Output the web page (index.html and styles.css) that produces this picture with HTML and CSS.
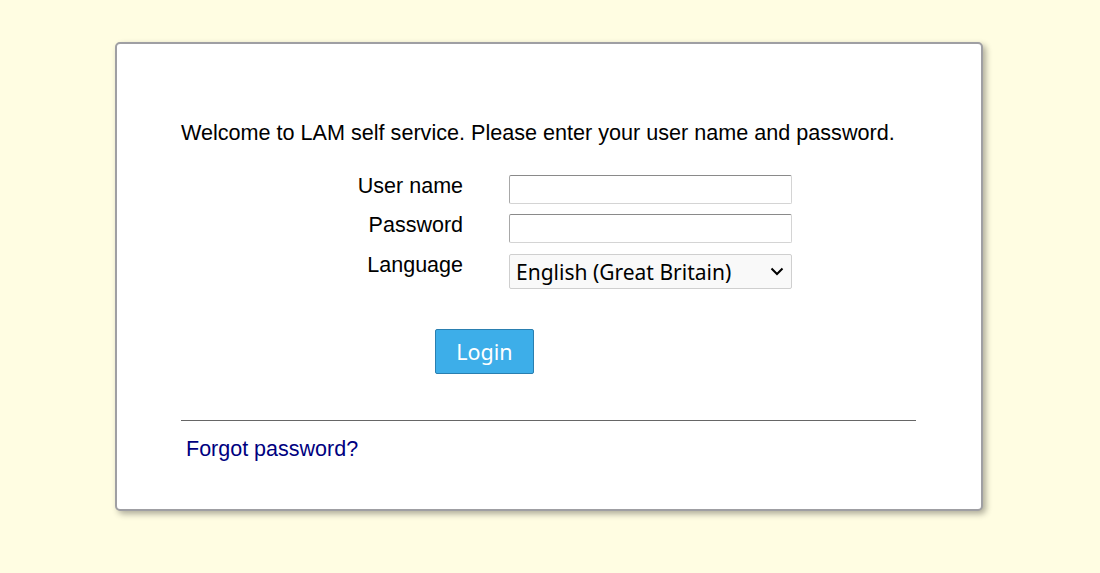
FILE: index.html
```html
<!DOCTYPE html>
<html>
<head>
<meta charset="utf-8">
<link rel="stylesheet" href="styles.css">
</head>
<body>
<div class="page">
  <div class="card">
    <p class="welcome">Welcome to LAM self service. Please enter your user name and password.</p>
    <div class="form">
      <div class="row r1">
        <label class="lbl">User name</label>
        <input class="field" type="text">
      </div>
      <div class="row r2">
        <label class="lbl">Password</label>
        <input class="field" type="password">
      </div>
      <div class="row r3">
        <label class="lbl">Language</label>
        <div class="select">
          <span>English (Great Britain)</span>
          <svg class="chev" width="14" height="9" viewBox="0 0 14 9"><path d="M1.5 1.5 L7 7 L12.5 1.5" fill="none" stroke="#000" stroke-width="2"/></svg>
        </div>
      </div>
    </div>
    <div class="btnrow"><button class="login">Login</button></div>
    <div class="rule"></div>
    <a class="forgot" href="#">Forgot password?</a>
  </div>
</div>
</body>
</html>
```
FILE: styles.css
```css
html, body { margin: 0; padding: 0; }
body {
  background: #fffde2;
  font-family: "Liberation Sans", Arial, sans-serif;
  width: 1100px;
  height: 573px;
  overflow: hidden;
}
.page {
  padding: 42px 0 0 115px;
}
.card {
  box-sizing: border-box;
  width: 868px;
  height: 469px;
  background: #fff;
  border: 2px solid #9f9fa3;
  border-radius: 5px;
  box-shadow: 3px 3px 6px rgba(0,0,0,0.32);
  padding: 76px 0 0 64px;
}
.welcome {
  margin: 0;
  font-size: 21.6px;
  line-height: 26px;
  color: #000;
}
.form {
  margin-top: 29px;
}
.row {
  display: flex;
  align-items: center;
}
.lbl {
  width: 282px;
  text-align: right;
  font-size: 21.5px;
  color: #000;
  margin-right: 46px;
}
.r1 { height: 29px; }
.r2 { height: 29px; margin-top: 10px; }
.r3 { height: 35px; margin-top: 11px; }
.r1 .lbl { position: relative; top: -3px; }
.r2 .lbl { position: relative; top: -3px; }
.r3 .lbl { position: relative; top: -6px; }
.field {
  box-sizing: border-box;
  width: 283px;
  height: 29px;
  margin: 0;
  border: 1px solid #d4d4d4;
  border-top-color: #8a8a8a;
  border-left-color: #a8a8a8;
  border-radius: 2px;
  background: #fff;
}
.select {
  box-sizing: border-box;
  width: 283px;
  height: 35px;
  border: 1px solid #cfcfcf;
  border-radius: 2px;
  background: #f9f9f9;
  display: flex;
  align-items: center;
  justify-content: space-between;
  padding: 0 7px 0 6px;
  font-family: "Noto Sans", "Open Sans", sans-serif;
  font-size: 21px;
  color: #000;
}
.chev { display: block; }
.btnrow {
  margin-top: 40px;
  padding-left: 254px;
}
.login {
  box-sizing: border-box;
  width: 99px;
  height: 45px;
  background: #3daee9;
  border: 1px solid #2a7fb0;
  border-radius: 2px;
  color: #fff;
  font-family: "Noto Sans", "Open Sans", sans-serif;
  font-size: 21.5px;
  padding: 0;
}
.rule {
  margin-top: 46px;
  width: 735px;
  height: 1px;
  background: #666;
}
.forgot {
  display: inline-block;
  margin: 16px 0 0 5px;
  font-size: 21.5px;
  color: #000080;
  text-decoration: none;
}
```
